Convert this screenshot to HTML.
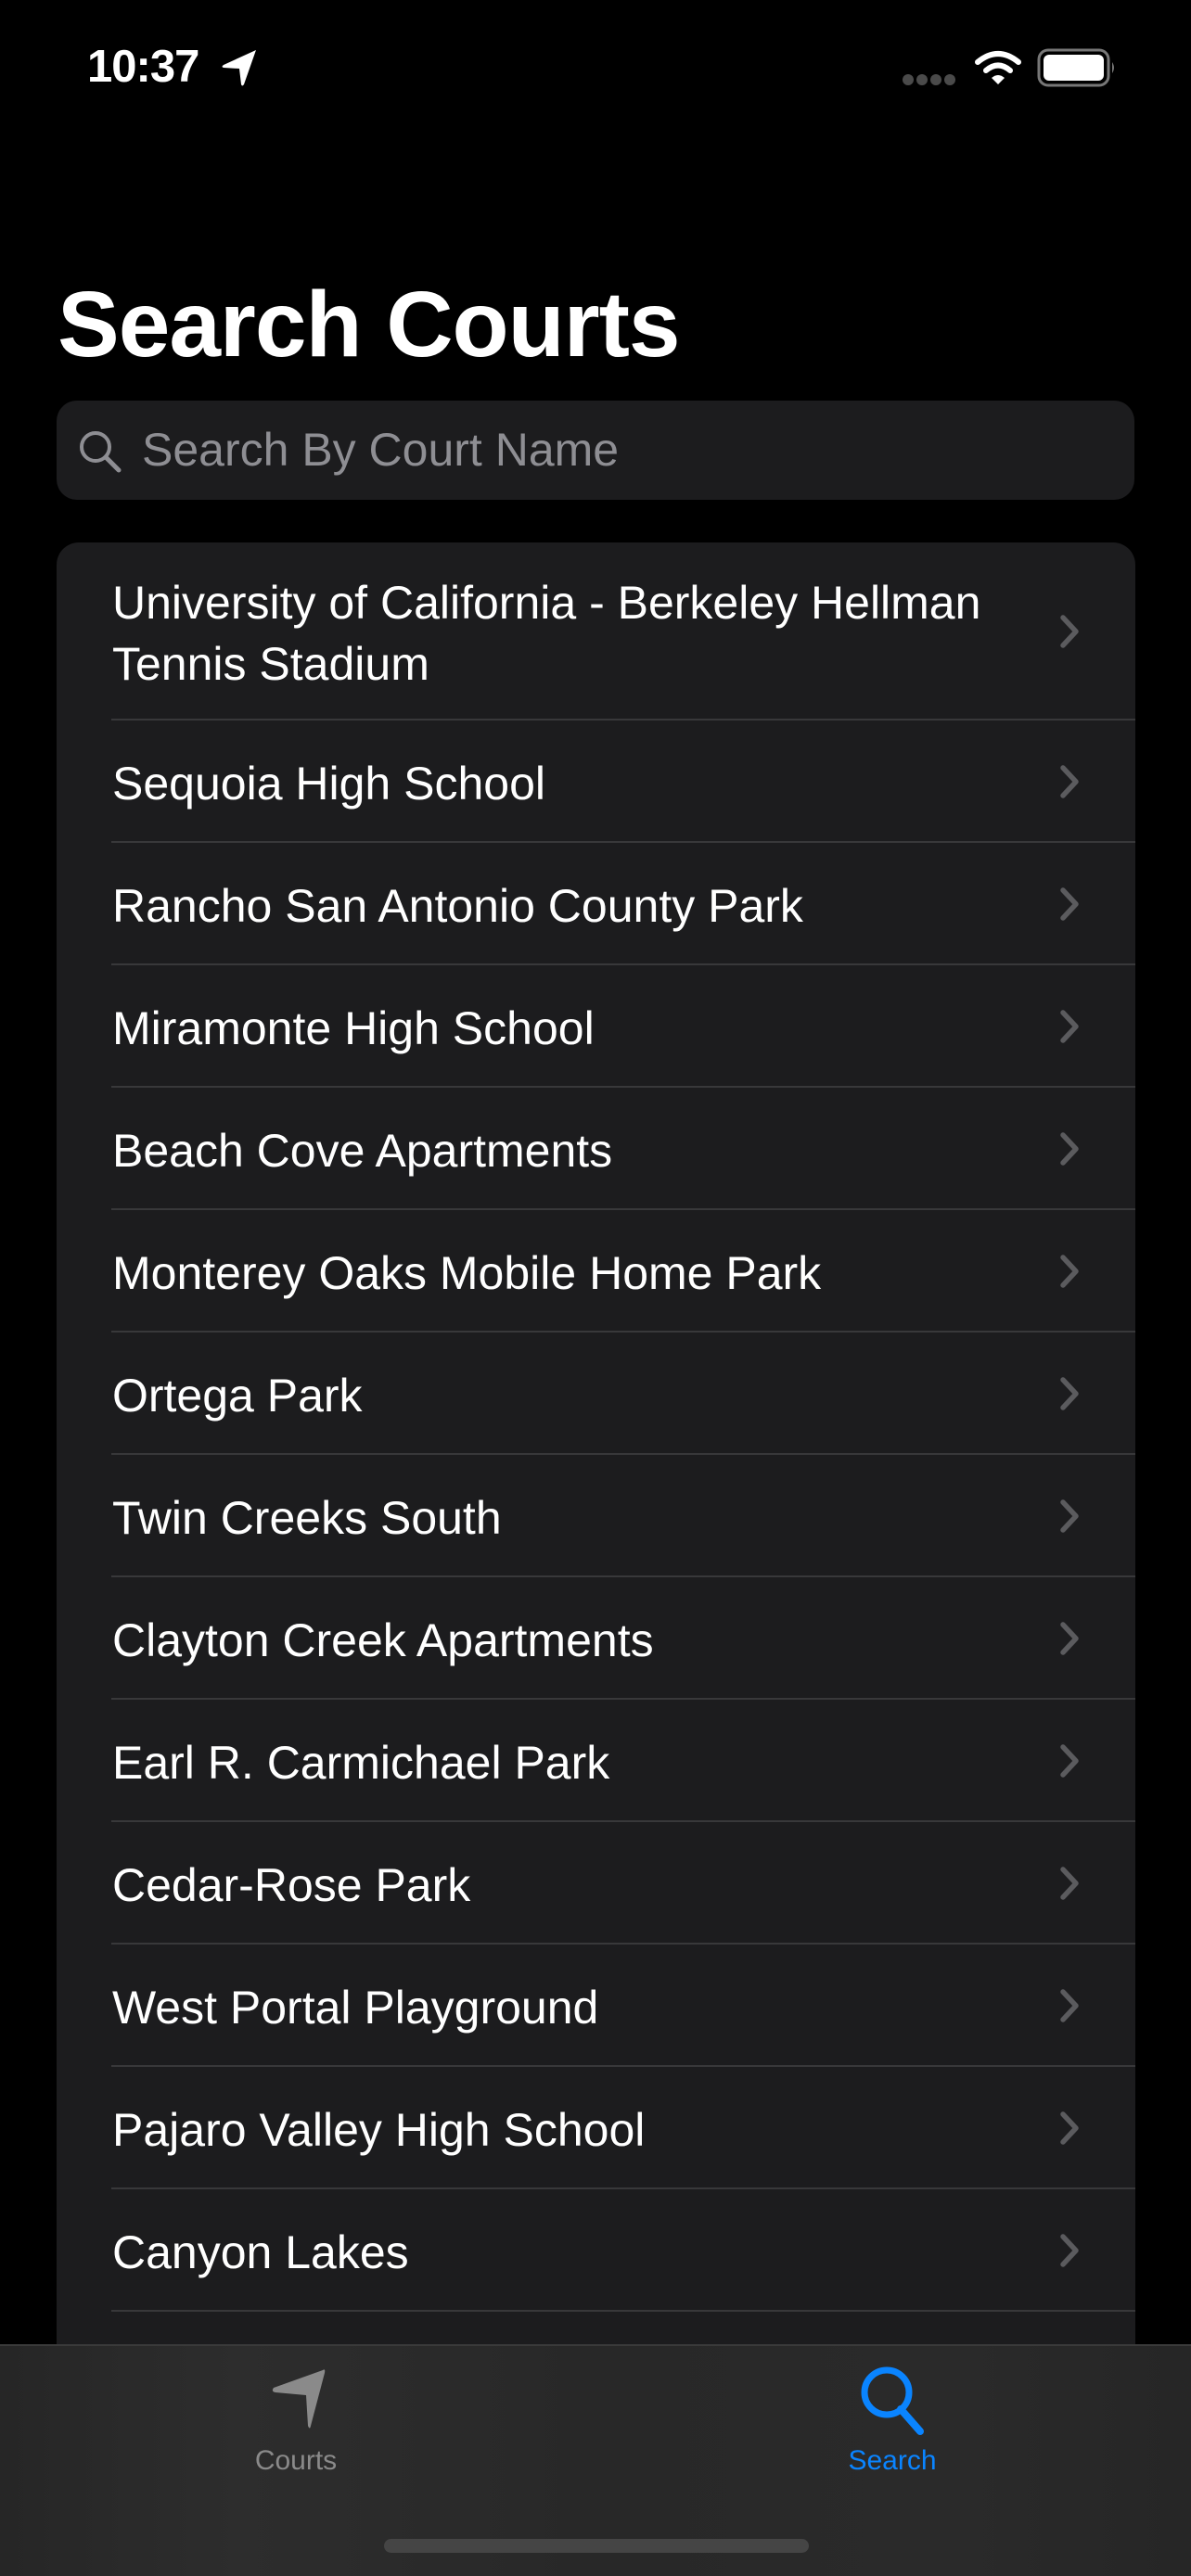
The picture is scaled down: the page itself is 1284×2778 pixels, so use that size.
<!DOCTYPE html>
<html><head><meta charset="utf-8"><style>
*{margin:0;padding:0;box-sizing:border-box}
html,body{width:1284px;height:2778px;background:#000;overflow:hidden;font-family:"Liberation Sans",sans-serif;color:#fff}
.abs{position:absolute}
.title{left:62px;top:290px;font-size:100px;font-weight:bold;letter-spacing:-1px;line-height:120px}
.search{left:61px;top:432px;width:1162px;height:107px;background:#1c1c1e;border-radius:22px}
.search .ph{position:absolute;left:92px;top:0;line-height:107px;font-size:50px;color:#8e8e93}
.card{left:61px;top:585px;width:1163px;height:2000px;background:#1c1c1e;border-radius:24px;overflow:hidden}
.row{position:relative;height:132px;display:flex;align-items:center;padding-left:60px;padding-top:3px;font-size:50px;line-height:66px}
.row:after{content:"";position:absolute;left:59px;right:0;bottom:0;height:2px;background:#38383a}
.row svg{position:absolute;right:60px;top:50%;margin-top:-18px}
.tab{left:0;top:2528px;width:1284px;height:250px;background:linear-gradient(90deg,#262626,#2d2d2d 20%,#282828 50%,#2a2a2a 80%,#262626);border-top:2px solid #3a3a3a}
</style></head><body>
<div class="abs" style="left:94px;top:44px;font-size:49px;font-weight:bold;letter-spacing:-1px">10:37</div>
<svg class="abs" style="left:238px;top:52px" width="40" height="42" viewBox="0 0 40 42"><path d="M38 2 L3 18 Q0 20 3 21 L20 22 L22 39 Q23 42 25 39 Z" fill="#fff"/></svg>
<svg class="abs" style="left:968px;top:76px" width="66" height="20"><g fill="#4a4a4a"><circle cx="11" cy="10" r="6"/><circle cx="26" cy="10" r="6"/><circle cx="41" cy="10" r="6"/><circle cx="56" cy="10" r="6"/></g></svg>
<svg class="abs" style="left:1050px;top:54px" width="52" height="38" viewBox="0 0 52 38"><g fill="none" stroke="#fff" stroke-width="6" stroke-linecap="round"><path d="M4 13 Q26 -5 48 13"/><path d="M13 22 Q26 11 39 22"/></g><path d="M19 30 Q26 24 33 30 L26 37 Z" fill="#fff"/></svg>
<svg class="abs" style="left:1118px;top:52px" width="86" height="42"><rect x="2" y="2" width="75" height="38" rx="10" fill="none" stroke="#777" stroke-width="3"/><rect x="7" y="7" width="65" height="28" rx="6" fill="#fff"/><path d="M81 15 Q85 21 81 27 Z" fill="#777"/></svg>
<div class="abs title">Search Courts</div>
<div class="abs search">
<svg style="position:absolute;left:22px;top:30px" width="50" height="50" viewBox="0 0 50 50"><circle cx="20" cy="20" r="15" fill="none" stroke="#8e8e93" stroke-width="4"/><path d="M31 31 L45 45" stroke="#8e8e93" stroke-width="5" stroke-linecap="round"/></svg>
<div class="ph">Search By Court Name</div></div>
<div class="abs card">
<div class="row" style="height:192px;padding-top:4px">University of California - Berkeley Hellman<br>Tennis Stadium<svg width="22" height="36"><path d="M4 3 L18 18 L4 33" fill="none" stroke="#5b5b5e" stroke-width="5.5" stroke-linecap="round" stroke-linejoin="round"/></svg></div>
<div class="row">Sequoia High School<svg width="22" height="36"><path d="M4 3 L18 18 L4 33" fill="none" stroke="#5b5b5e" stroke-width="5.5" stroke-linecap="round" stroke-linejoin="round"/></svg></div>
<div class="row">Rancho San Antonio County Park<svg width="22" height="36"><path d="M4 3 L18 18 L4 33" fill="none" stroke="#5b5b5e" stroke-width="5.5" stroke-linecap="round" stroke-linejoin="round"/></svg></div>
<div class="row">Miramonte High School<svg width="22" height="36"><path d="M4 3 L18 18 L4 33" fill="none" stroke="#5b5b5e" stroke-width="5.5" stroke-linecap="round" stroke-linejoin="round"/></svg></div>
<div class="row">Beach Cove Apartments<svg width="22" height="36"><path d="M4 3 L18 18 L4 33" fill="none" stroke="#5b5b5e" stroke-width="5.5" stroke-linecap="round" stroke-linejoin="round"/></svg></div>
<div class="row">Monterey Oaks Mobile Home Park<svg width="22" height="36"><path d="M4 3 L18 18 L4 33" fill="none" stroke="#5b5b5e" stroke-width="5.5" stroke-linecap="round" stroke-linejoin="round"/></svg></div>
<div class="row">Ortega Park<svg width="22" height="36"><path d="M4 3 L18 18 L4 33" fill="none" stroke="#5b5b5e" stroke-width="5.5" stroke-linecap="round" stroke-linejoin="round"/></svg></div>
<div class="row">Twin Creeks South<svg width="22" height="36"><path d="M4 3 L18 18 L4 33" fill="none" stroke="#5b5b5e" stroke-width="5.5" stroke-linecap="round" stroke-linejoin="round"/></svg></div>
<div class="row">Clayton Creek Apartments<svg width="22" height="36"><path d="M4 3 L18 18 L4 33" fill="none" stroke="#5b5b5e" stroke-width="5.5" stroke-linecap="round" stroke-linejoin="round"/></svg></div>
<div class="row">Earl R. Carmichael Park<svg width="22" height="36"><path d="M4 3 L18 18 L4 33" fill="none" stroke="#5b5b5e" stroke-width="5.5" stroke-linecap="round" stroke-linejoin="round"/></svg></div>
<div class="row">Cedar-Rose Park<svg width="22" height="36"><path d="M4 3 L18 18 L4 33" fill="none" stroke="#5b5b5e" stroke-width="5.5" stroke-linecap="round" stroke-linejoin="round"/></svg></div>
<div class="row">West Portal Playground<svg width="22" height="36"><path d="M4 3 L18 18 L4 33" fill="none" stroke="#5b5b5e" stroke-width="5.5" stroke-linecap="round" stroke-linejoin="round"/></svg></div>
<div class="row">Pajaro Valley High School<svg width="22" height="36"><path d="M4 3 L18 18 L4 33" fill="none" stroke="#5b5b5e" stroke-width="5.5" stroke-linecap="round" stroke-linejoin="round"/></svg></div>
<div class="row">Canyon Lakes<svg width="22" height="36"><path d="M4 3 L18 18 L4 33" fill="none" stroke="#5b5b5e" stroke-width="5.5" stroke-linecap="round" stroke-linejoin="round"/></svg></div>
</div>
<div class="abs tab">
<svg style="position:absolute;left:284px;top:22px" width="70" height="70" viewBox="0 0 70 70"><path d="M64 4 Q67 2 66 7 L51 64 Q50 69 48 64 L46 31 L13 28 Q8 27 11 23 Z" fill="#8a8a8a"/></svg>
<div style="position:absolute;left:219px;width:200px;top:107px;text-align:center;font-size:30px;color:#8a8a8a">Courts</div>
<svg style="position:absolute;left:924px;top:20px" width="76" height="76" viewBox="0 0 76 76"><circle cx="32" cy="30" r="24" fill="none" stroke="#0a84ff" stroke-width="7"/><path d="M47 48 L68 72" stroke="#0a84ff" stroke-width="8" stroke-linecap="round"/></svg>
<div style="position:absolute;left:862px;width:200px;top:107px;text-align:center;font-size:30px;color:#0a84ff">Search</div>
<div style="position:absolute;left:414px;top:208px;width:458px;height:15px;border-radius:8px;background:#454545"></div>
</div>
</body></html>
